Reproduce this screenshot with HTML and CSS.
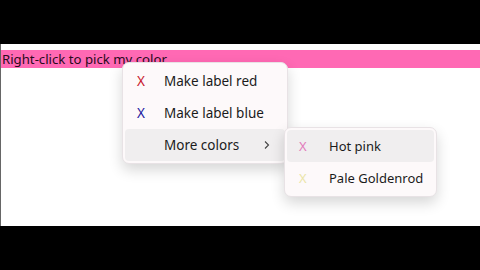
FILE: index.html
```html
<!DOCTYPE html>
<html lang="en">
<head>
    <meta charset="UTF-8">
    <title>Color picker label</title>
    <link rel="stylesheet" href="styles.css">
</head>
<body>
    <div class="window">
        <div class="label">Right-click to pick my color</div>

        <!-- context menu, opened over the label -->
        <div class="menu main-menu">
            <div class="item"><span class="mark red">X</span><span>Make label red</span></div>
            <div class="item"><span class="mark blue">X</span><span>Make label blue</span></div>
            <div class="item active"><span class="mark"></span><span class="grow">More colors</span>
                <svg class="chevron" width="8" height="10" viewBox="0 0 8 10"><path d="M2 1.5 L5.5 5 L2 8.5" fill="none" stroke="#444" stroke-width="1.1"/></svg>
            </div>
        </div>

        <div class="menu sub-menu">
            <div class="item active"><span class="mark pink">X</span><span>Hot pink</span></div>
            <div class="item"><span class="mark gold">X</span><span>Pale Goldenrod</span></div>
        </div>
    </div>
</body>
</html>
```

FILE: styles.css
```css
body {
    margin: 0;
    background-color: #000;
    font-family: "Noto Sans", "Open Sans", sans-serif;
    height: 270px;
    overflow: hidden;
}
.window {
    position: relative;
    margin-top: 44px;
    padding-top: 6px;
    height: 176px;
    background-color: #fff;
    border-left: 1px solid #666;
}
.label {
    height: 18px;
    line-height: 18px;
    padding-left: 1px;
    background-color: #ff69b4;
    color: #2a0a1c;
    font-size: 13.2px;
}
.menu {
    position: absolute;
    background-color: #fdf9fa;
    border: 1px solid #e8e2e5;
    border-radius: 7px;
    box-shadow: 0 6px 14px rgba(0,0,0,0.16);
    padding: 2px 2px;
    font-size: 13.5px;
    color: #1b1b1b;
    white-space: nowrap;
}
.main-menu {
    left: 121px;
    top: 18px;
    width: 160px;
}
.sub-menu {
    left: 283px;
    top: 83px;
    width: 147px;
    font-size: 13px;
}
.item {
    display: flex;
    align-items: center;
    height: 32px;
    padding: 0 14px 0 12px;
    border-radius: 4px;
}
.sub-menu .item {
    padding: 0 6px 0 12px;
}
.item.active {
    background-color: #f0eeef;
}
.mark {
    flex: none;
    width: 27px;
}
.sub-menu .mark {
    width: 30px;
}
.grow {
    flex: 1;
}
.red { color: #c8202e; }
.blue { color: #1c1aa0; }
.pink { color: #e27bbb; }
.gold { color: #ebe5a8; }
```
